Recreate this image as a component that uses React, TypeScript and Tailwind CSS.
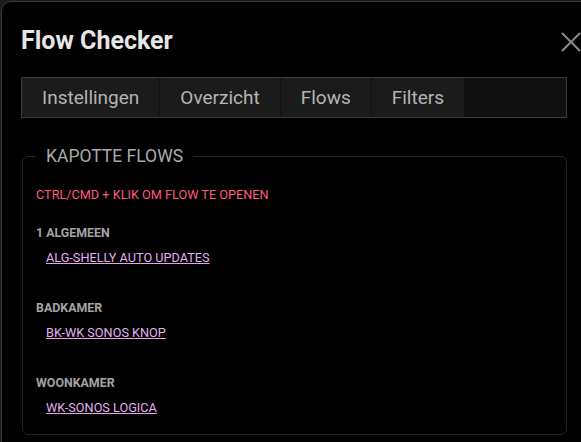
const groups = [
  { name: '1 ALGEMEEN', flows: ['ALG-SHELLY AUTO UPDATES'] },
  { name: 'BADKAMER', flows: ['BK-WK SONOS KNOP'] },
  { name: 'WOONKAMER', flows: ['WK-SONOS LOGICA'] },
];

const tabs = ['Instellingen', 'Overzicht', 'Flows', 'Filters'];

export default function App() {
  return (
    <div className="h-[442px] w-[581px] overflow-hidden bg-[#1c1c1c] pl-px pt-px font-['Roboto',sans-serif]">
      <div className="h-[500px] w-[640px] rounded-tl-[10px] border border-[#3a3a3a] bg-black pl-[19px] pt-[23px]">
        <div className="flex w-[560px] items-center justify-between">
          <h1 className="text-[25px] leading-[32px] font-bold text-[#e6e6e6]">Flow Checker</h1>
          <svg width="20" height="20" viewBox="0 0 20 20" className="mt-[1px]">
            <path d="M1 1L19 19M19 1L1 19" stroke="#8a8a8a" strokeWidth="2" fill="none" />
          </svg>
        </div>

        <div className="mt-[20px] flex h-[41px] w-[546px] gap-px border border-[#3c3c3c] bg-[#111]">
          {tabs.map((t) => (
            <div
              key={t}
              className="rounded-[3px] bg-[#1b1b1b] px-[20px] text-[19px] leading-[39px] text-[#b4b4b4]"
            >
              {t}
            </div>
          ))}
        </div>

        <fieldset className="mt-[28px] ml-px w-[545px] rounded-[6px] border border-[#262626] px-[13px] pb-[18px]">
          <legend className="px-[10px] text-[17.5px] leading-[20px] text-[#aaa]">KAPOTTE FLOWS</legend>
          <div className="pt-[21px]">
            <p className="text-[12.7px] leading-[16px] text-[#ff5a78]">CTRL/CMD + KLIK OM FLOW TE OPENEN</p>
            {groups.map((g, i) => (
              <div key={g.name} className={i === 0 ? 'mt-[22px]' : 'mt-[34px]'}>
                <div className="text-[12.4px] leading-[16px] font-bold text-[#a4a4a4]">{g.name}</div>
                {g.flows.map((f) => (
                  <a
                    key={f}
                    href="#"
                    className="mt-[9px] ml-[10px] block w-fit text-[12.7px] leading-[16px] text-[#e2b0f4] underline decoration-[#f0a0e8]"
                  >
                    {f}
                  </a>
                ))}
              </div>
            ))}
          </div>
        </fieldset>
      </div>
    </div>
  );
}
